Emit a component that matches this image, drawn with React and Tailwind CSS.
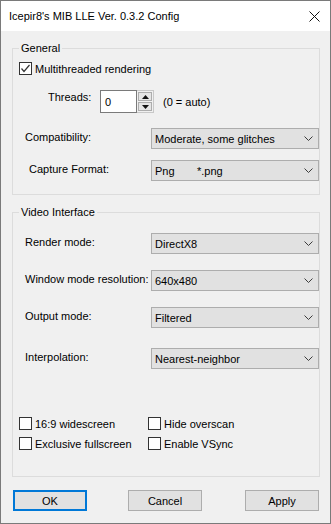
import React from "react";

function Chevron() {
  return (
    <svg width="9" height="6" viewBox="0 0 9 6" className="shrink-0">
      <polyline points="0.5,0.5 4.5,4.5 8.5,0.5" fill="none" stroke="#3c3c3c" strokeWidth="1" />
    </svg>
  );
}

function Dropdown({ children }) {
  return (
    <div className="flex h-[21px] w-[168px] items-center justify-between border border-[#adadad] bg-[#e1e1e1] pl-[3px] pr-[5px]">
      <div className="flex items-center leading-[14px]">{children}</div>
      <Chevron />
    </div>
  );
}

function CheckBox({ checked, label }) {
  return (
    <div className="flex h-[13px] items-center gap-[3px]">
      <div className="flex h-[13px] w-[13px] shrink-0 items-center justify-center border border-[#333333] bg-white">
        {checked && (
          <svg width="11" height="11" viewBox="0 0 11 11">
            <polyline points="1.5,5.5 4,8.5 9.5,2" fill="none" stroke="#333333" strokeWidth="1.2" />
          </svg>
        )}
      </div>
      <span className="leading-[14px] whitespace-nowrap">{label}</span>
    </div>
  );
}

function Row({ label, pad = "pl-[12px]", mt, children }) {
  return (
    <div className={`flex ${mt}`}>
      <div className={`w-[138px] shrink-0 pt-[2px] leading-[14px] ${pad}`}>{label}</div>
      {children}
    </div>
  );
}

function GroupBox({ title, className, children }) {
  return (
    <div className={`relative w-[308px] border border-[#dcdcdc] ${className}`}>
      <span className="absolute left-[6px] top-[-8px] bg-[#f0f0f0] px-[2px] leading-[14px]">
        {title}
      </span>
      {children}
    </div>
  );
}

function Button({ children, primary, className = "" }) {
  return (
    <div
      className={`flex h-[21px] w-[74px] items-center justify-center bg-[#e1e1e1] leading-[14px] ${
        primary ? "border-2 border-[#0078d7]" : "border border-[#adadad]"
      } ${className}`}
    >
      {children}
    </div>
  );
}

export default function App() {
  return (
    <div className="flex h-[524px] w-[331px] flex-col border border-[#7a7a7a] bg-[#f0f0f0] font-['Liberation_Sans',Arial,sans-serif] text-[11px] text-black">
      <div className="flex h-[30px] shrink-0 items-center justify-between bg-white pl-[8px] pr-[10px]">
        <span className="leading-[14px]">Icepir8's MIB LLE Ver. 0.3.2 Config</span>
        <svg width="11" height="11" viewBox="0 0 11 11">
          <path d="M0.5 0.5 L10.5 10.5 M10.5 0.5 L0.5 10.5" stroke="#111" strokeWidth="1" />
        </svg>
      </div>

      <div className="flex flex-col px-[11px]">
        <GroupBox title="General" className="mt-[17px] h-[147px]">
          <div className="mt-[13px] pl-[6px]">
            <CheckBox checked label="Multithreaded rendering" />
          </div>

          <div className="mt-[15px] flex items-start">
            <div className="w-[87px] shrink-0 pl-[35px] leading-[14px]">Threads:</div>
            <div className="flex h-[23px]">
              <div className="flex h-[23px] w-[37px] items-center border border-[#7a7a7a] bg-white pl-[4px] leading-[14px]">
                0
              </div>
              <div className="flex h-[23px] w-[17px] flex-col justify-center gap-[1px] border-y border-r border-[#c8c8c8] bg-[#f0f0f0] px-[1px]">
                <div className="flex h-[9px] items-center justify-center border border-[#adadad] bg-[#e5e5e5]">
                  <svg width="7" height="4" viewBox="0 0 7 4">
                    <polygon points="0,4 7,4 3.5,0" fill="#111" />
                  </svg>
                </div>
                <div className="flex h-[9px] items-center justify-center border border-[#adadad] bg-[#e5e5e5]">
                  <svg width="7" height="4" viewBox="0 0 7 4">
                    <polygon points="0,0 7,0 3.5,4" fill="#111" />
                  </svg>
                </div>
              </div>
            </div>
            <span className="ml-[9px] self-center leading-[14px]">(0 = auto)</span>
          </div>

          <Row label="Compatibility:" mt="mt-[15px]">
            <Dropdown>Moderate, some glitches</Dropdown>
          </Row>
          <Row label="Capture Format:" pad="pl-[16px]" mt="mt-[11px]">
            <Dropdown>
              <span className="w-[42px]">Png</span>
              <span>*.png</span>
            </Dropdown>
          </Row>
        </GroupBox>

        <GroupBox title="Video Interface" className="mt-[17px] h-[265px]">
          <Row label="Render mode:" mt="mt-[20px]">
            <Dropdown>DirectX8</Dropdown>
          </Row>
          <Row label="Window mode resolution:" mt="mt-[16px]">
            <Dropdown>640x480</Dropdown>
          </Row>
          <Row label="Output mode:" mt="mt-[16px]">
            <Dropdown>Filtered</Dropdown>
          </Row>
          <Row label="Interpolation:" mt="mt-[20px]">
            <Dropdown>Nearest-neighbor</Dropdown>
          </Row>

          <div className="mt-[48px] grid grid-cols-[129px_1fr] gap-y-[7px] pl-[6px]">
            <CheckBox label="16:9 widescreen" />
            <CheckBox label="Hide overscan" />
            <CheckBox label="Exclusive fullscreen" />
            <CheckBox label="Enable VSync" />
          </div>
        </GroupBox>

        <div className="mt-[13px] flex">
          <Button primary className="ml-[1px]">OK</Button>
          <Button className="ml-[41px]">Cancel</Button>
          <Button className="ml-[43px]">Apply</Button>
        </div>
      </div>
    </div>
  );
}
